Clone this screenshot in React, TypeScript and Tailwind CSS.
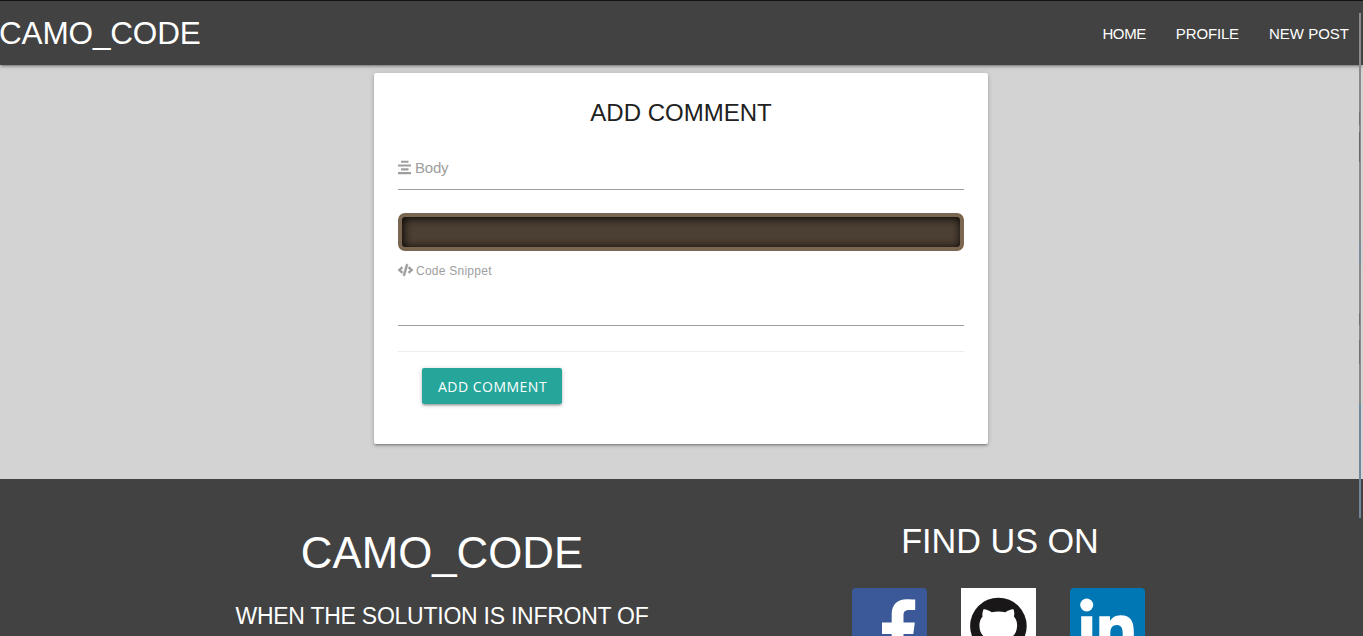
import React from "react";
import { FaCode } from "react-icons/fa";

const navLinks = [
  { label: "HOME", className: "tracking-[-0.4px]" },
  { label: "PROFILE", className: "tracking-[-0.15px]" },
  { label: "NEW POST", className: "" },
];

function Header() {
  return (
    <header className="relative z-10 flex h-[65px] shrink-0 items-start justify-between border-t border-[#111] bg-[#424242] text-white shadow-[0_2px_2px_0_rgba(0,0,0,0.14),0_3px_1px_-2px_rgba(0,0,0,0.12),0_1px_5px_0_rgba(0,0,0,0.2)]">
      <a className="-ml-px text-[31.5px] leading-[64px] tracking-[-0.15px]">CAMO_CODE</a>
      <nav className="flex gap-[30px] pr-[14px] text-[15px] leading-[66px]">
        {navLinks.map((link) => (
          <a key={link.label} className={link.className}>
            {link.label}
          </a>
        ))}
      </nav>
    </header>
  );
}

function AlignCenterIcon() {
  return (
    <svg viewBox="0 0 13 15" className="mt-[3px] mr-1 h-[15px] w-[13px]" fill="currentColor">
      <rect x="3" y="0.800" width="7.500" height="2" rx="0.300" />
      <rect x="0" y="4.500" width="13" height="2.100" rx="0.300" />
      <rect x="3" y="8.300" width="7.500" height="2.100" rx="0.300" />
      <rect x="0" y="12" width="13" height="2.200" rx="0.300" />
    </svg>
  );
}

function CommentCard() {
  return (
    <main className="mt-2 ml-[374px] h-[371px] w-[614px] shrink-0 rounded-[2px] bg-white p-6 shadow-[0_2px_2px_0_rgba(0,0,0,0.14),0_3px_1px_-2px_rgba(0,0,0,0.12),0_1px_5px_0_rgba(0,0,0,0.2)]">
      <h1 className="text-center text-2xl leading-[32px] text-[#212121]">ADD COMMENT</h1>
      <div className="mt-4 flex h-[45px] items-start border-b border-[#9e9e9e] pt-3 text-[15px] text-[#9e9e9e]">
        <AlignCenterIcon />
        <span className="leading-[22px] tracking-[-0.2px]">Body</span>
      </div>
      <div className="mt-[23px] h-[38px] rounded-[7px] border-4 border-[#7a6651] bg-[#4c3f33] shadow-[inset_1px_1px_10px_#000]" />
      <div className="flex h-[75px] items-start border-b border-[#9e9e9e] pt-3 text-xs leading-4 text-[#9e9e9e]">
        <FaCode className="mt-[1px] mr-[3px] h-3 w-[15px] overflow-visible" strokeWidth={20} />
        <span className="tracking-[0.25px]">Code Snippet</span>
      </div>
      <div className="mt-[25px] border-t border-[#ededed] px-6 pt-4">
        <button className="h-9 w-[140px] rounded-[2px] bg-[#26a69a] pt-[2px] pl-px font-['Open_Sans',sans-serif] text-sm tracking-[0.5px] text-white shadow-[0_2px_2px_0_rgba(0,0,0,0.14),0_3px_1px_-2px_rgba(0,0,0,0.12),0_1px_5px_0_rgba(0,0,0,0.2)]">
          ADD COMMENT
        </button>
      </div>
    </main>
  );
}

function FacebookLogo() {
  return (
    <svg viewBox="0 0 75 75" className="size-[75px]">
      <rect width="75" height="75" rx="4" fill="#3b5998" />
      <path
        d="M51.500 75V46h9.800l1.500-11.500H51.500v-7c0-3.400 1-5.600 5.700-5.600h6V11.600c-1-.1-4.600-.4-8.800-.4-8.700 0-14.700 5.300-14.700 15v8.300H30V46h9.700v29z"
        fill="#fff"
      />
    </svg>
  );
}

function GithubLogo() {
  return (
    <svg viewBox="0 0 75 75" className="size-[75px]">
      <rect width="75" height="75" fill="#fff" />
      <circle cx="37.400" cy="38" r="28.300" fill="#191717" />
      <path
        d="M22.500 21.300c2.500-.2 5.500 1.200 8.200 3 4.400-1.200 9.200-1.200 13.600 0 2.700-1.800 5.700-3.200 8.200-3 1 2.500 1 5.200.4 7.200 2 2.300 3.200 5 3.200 8.400 0 10.600-6.200 13.600-12.200 14.300 1.500 1.600 2 3.600 2 6v8H28.600V60c-8 2-9-3-12-5 4-1 5 5 12 3 0-3 .5-5 2-6.600-6-.7-12.200-3.700-12.200-14.300 0-3.400 1.200-6.300 3.200-8.600-.6-2-.1-4.700.9-7.200z"
        fill="#fff"
      />
    </svg>
  );
}

function LinkedinLogo() {
  return (
    <svg viewBox="0 0 75 75" className="size-[75px]">
      <rect width="75" height="75" rx="4" fill="#0077b5" />
      <circle cx="16.700" cy="17" r="6.500" fill="#fff" />
      <path
        d="M11.200 28.200h11.100V64H11.200zM29.300 28.200H40v4.900c1.500-2.800 5.100-5.800 10.500-5.800 11.200 0 13.300 7.400 13.300 17V64H52.700V46.600c0-4.100-.1-9.500-5.800-9.500s-6.600 4.500-6.600 9.200V64h-11z"
        fill="#fff"
      />
    </svg>
  );
}

function Footer() {
  return (
    <footer className="mt-[35px] flex flex-1 bg-[#424242] text-center text-white">
      <div className="ml-[204px] w-[476px] shrink-0 pt-[50px]">
        <h2 className="text-[43.8px] leading-[48px]">CAMO_CODE</h2>
        <p className="mt-[26px] text-[23px] leading-[27px] tracking-[-0.25px] whitespace-nowrap">
          WHEN THE SOLUTION IS INFRONT OF
        </p>
      </div>
      <div className="ml-[82px] w-[476px] shrink-0 pt-[43px]">
        <h2 className="text-[34.2px] leading-[38px]">FIND US ON</h2>
        <div className="mt-7 flex justify-center gap-[34px] pr-1">
          <FacebookLogo />
          <GithubLogo />
          <LinkedinLogo />
        </div>
      </div>
    </footer>
  );
}

function ScrollIndicator() {
  return (
    <div className="absolute top-[13px] right-[2px] z-20 flex h-[505px] w-[2px] flex-col bg-[#8a8a8a]">
      <div className="mt-[99px] h-[13px] w-px bg-[#707070]" />
      <div className="mt-[7px] h-[30px] w-px bg-[#666]" />
      <div className="mt-[81px] h-[22px] bg-[#7c8b99]" />
      <div className="mt-12 h-3 w-px bg-[#707070]" />
      <div className="mt-[15px] h-6 w-px bg-[#707070]" />
      <div className="mt-[39px] flex-1 bg-[#74879a]" />
    </div>
  );
}

export default function App() {
  return (
    <div className="relative flex h-[636px] w-full flex-col overflow-hidden bg-[#d3d3d3] font-['Liberation_Sans',Arial,sans-serif]">
      <Header />
      <CommentCard />
      <Footer />
      <ScrollIndicator />
    </div>
  );
}
